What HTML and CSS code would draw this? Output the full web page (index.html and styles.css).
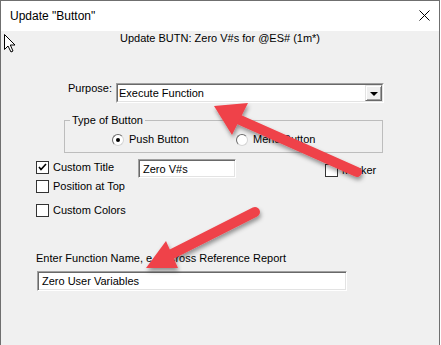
FILE: index.html
```html
<!DOCTYPE html>
<html>
<head>
<meta charset="utf-8">
<link rel="stylesheet" href="styles.css">
</head>
<body>
<div class="window">
  <div class="titlebar">
    <span class="title">Update "Button"</span>
    <svg class="close" width="11" height="11" viewBox="0 0 11 11"><path d="M0.5 0.5 L10.5 10.5 M10.5 0.5 L0.5 10.5" stroke="#000" stroke-width="1" fill="none"/></svg>
  </div>
  <div class="content">
    <div class="subtitle">Update BUTN: Zero V#s for @ES# (1m*)</div>
    <div class="purpose-row">
      <span class="purpose-label">Purpose:</span>
      <div class="combo">
        <div class="combo-inner">
          <span class="combo-text">Execute Function</span>
          <span class="drop"><span class="tri"></span></span>
        </div>
      </div>
    </div>
    <fieldset class="group">
      <legend>Type of Button</legend>
      <div class="radios">
        <label class="radio"><span class="rb checked"></span>Push Button</label>
        <label class="radio"><span class="rb"></span>Menu Button</label>
      </div>
    </fieldset>
    <div class="row row1">
      <label class="check wide"><span class="cb checked"><svg width="11" height="11" viewBox="0 0 11 11"><path d="M2 5 L4 7.5 L9 2" stroke="#000" stroke-width="1.6" fill="none"/></svg></span>Custom Title</label>
      <div class="textbox small"><span>Zero V#s</span></div>
      <label class="check marker"><span class="cb"></span>Marker</label>
    </div>
    <div class="row row2">
      <label class="check"><span class="cb"></span>Position at Top</label>
    </div>
    <div class="row row3">
      <label class="check"><span class="cb"></span>Custom Colors</label>
    </div>
    <div class="fn-label">Enter Function Name, e.g. Cross Reference Report</div>
    <div class="textbox big"><span>Zero User Variables</span></div>
  </div>
</div>
<svg class="overlay" width="441" height="345" viewBox="0 0 441 345">
  <defs>
    <filter id="sh" x="-20%" y="-20%" width="140%" height="140%">
      <feDropShadow dx="1" dy="3" stdDeviation="2" flood-color="#000" flood-opacity="0.4"/>
    </filter>
  </defs>
  <g filter="url(#sh)" fill="#ef4249" stroke="none">
    <line x1="240" y1="120" x2="357" y2="172" stroke="#ef4249" stroke-width="10" stroke-linecap="round"/>
    <polygon points="214,106 248,103 232,135"/>
    <line x1="170" y1="255" x2="255" y2="212" stroke="#ef4249" stroke-width="10" stroke-linecap="round"/>
    <polygon points="146,268 166,241 178,268"/>
  </g>
  <path d="M4.5 34.5 L4.5 49.5 L8 46 L11 52 L13 51 L10.3 45 L15 45 Z" fill="#fff" stroke="#000" stroke-width="1" stroke-linejoin="miter"/>
</svg>
</body>
</html>
```

FILE: styles.css
```css
html, body {
  margin: 0;
  padding: 0;
  background: #ffffff;
}
body {
  position: relative;
  width: 441px;
  height: 345px;
  overflow: hidden;
  font-family: "Liberation Sans", Arial, sans-serif;
  font-size: 11px;
  color: #000;
}
.window {
  box-sizing: border-box;
  width: 440px;
  height: 346px;
  border: 1px solid #6f6f6f;
  border-bottom: none;
  background: #f0f0f0;
  display: flex;
  flex-direction: column;
}
.titlebar {
  height: 30px;
  background: #ffffff;
  display: flex;
  align-items: center;
  justify-content: space-between;
  padding: 0 9px 0 9px;
}
.title {
  font-size: 12px;
  line-height: 30px;
}
.close {
  display: block;
  margin-right: 0;
  margin-top: -1px;
}
.content {
  flex: 1;
  background: #f0f0f0;
}
.subtitle {
  margin-top: 1px;
  line-height: 13px;
  text-align: center;
}
.purpose-row {
  display: flex;
  align-items: flex-start;
  margin-top: 38px;
  padding-left: 67px;
}
.purpose-label {
  width: 48px;
  line-height: 13px;
  margin-top: -1px;
}
.combo {
  box-sizing: border-box;
  width: 268px;
  height: 20px;
  border: 1px solid;
  border-color: #a0a0a0 #ffffff #ffffff #a0a0a0;
}
.combo-inner {
  box-sizing: border-box;
  height: 18px;
  border: 1px solid;
  border-color: #696969 #e3e3e3 #e3e3e3 #696969;
  background: #fff;
  display: flex;
  justify-content: space-between;
}
.combo-text {
  padding-left: 1px;
  line-height: 16px;
}
.drop {
  box-sizing: border-box;
  width: 17px;
  height: 16px;
  background: #f0f0f0;
  border: 1px solid;
  border-color: #e3e3e3 #696969 #696969 #e3e3e3;
  box-shadow: inset 1px 1px #fff, inset -1px -1px #a0a0a0;
  display: flex;
  align-items: center;
  justify-content: center;
}
.tri {
  width: 0;
  height: 0;
  border-left: 4px solid transparent;
  border-right: 4px solid transparent;
  border-top: 4px solid #000;
  margin-top: 1px;
}
.group {
  box-sizing: border-box;
  width: 319px;
  margin: 11px 0 0 63px;
  padding: 6px 0 6px 0;
  border: 1px solid #bdbdbd;
  min-inline-size: 0;
}
.group legend {
  margin-left: 5px;
  padding: 0 2px;
  line-height: 13px;
}
.radios {
  display: grid;
  grid-template-columns: 124px 1fr;
  padding-left: 47px;
  line-height: 13px;
}
.radio {
  display: flex;
  align-items: center;
}
.rb {
  box-sizing: border-box;
  width: 12px;
  height: 12px;
  border-radius: 50%;
  border: 1px solid;
  border-color: #6a6a6a #d5d5d5 #d5d5d5 #6a6a6a;
  background: #fff;
  margin-right: 5px;
  display: flex;
  align-items: center;
  justify-content: center;
}
.rb.checked::after {
  content: "";
  width: 4px;
  height: 4px;
  border-radius: 50%;
  background: #000;
}
.row {
  display: flex;
  align-items: flex-start;
  padding-left: 35px;
}
.row1 {
  margin-top: 6px;
  height: 19px;
}
.row2 {
  margin-top: 2px;
}
.row3 {
  margin-top: 11px;
}
.check {
  display: flex;
  align-items: center;
  line-height: 13px;
}
.row1 .check.wide {
  width: 102px;
  margin-top: 2px;
}
.cb {
  box-sizing: border-box;
  width: 13px;
  height: 13px;
  border: 1px solid #333;
  background: #fff;
  margin-right: 4px;
  display: flex;
  align-items: center;
  justify-content: center;
}
.cb svg {
  display: block;
}
.check.marker {
  margin-left: 89px;
  margin-top: 5px;
}
.check.marker .cb {
  margin-right: 4px;
}
.textbox {
  box-sizing: border-box;
  border: 1px solid;
  border-color: #a0a0a0 #ffffff #ffffff #a0a0a0;
  background: #fff;
  box-shadow: inset 1px 1px #696969, inset -1px -1px #e3e3e3;
  padding: 2px 0 0 4px;
  line-height: 15px;
}
.textbox.small {
  width: 98px;
  height: 19px;
}
.fn-label {
  margin: 35px 0 0 35px;
  line-height: 13px;
}
.textbox.big {
  width: 310px;
  height: 20px;
  margin: 6px 0 0 36px;
}
.overlay {
  position: absolute;
  left: 0;
  top: 0;
  pointer-events: none;
}
```
